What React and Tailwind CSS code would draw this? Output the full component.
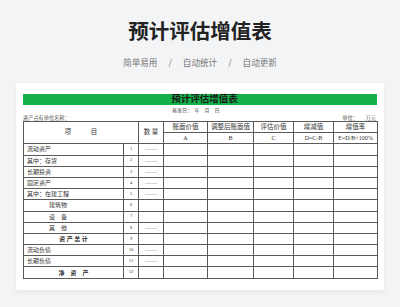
import React from 'react';

const serif = { fontFamily: "'Liberation Serif', 'Noto Sans CJK SC', serif" };

const rows = [
  { label: '流动资产', dash: true },
  { label: '其中：存货', dash: true },
  { label: '长期投资', dash: true },
  { label: '固定资产', dash: true },
  { label: '其中：在建工程', dash: true },
  { label: '建筑物', indent: true },
  { label: '设　备', indent: true },
  { label: '其　他', indent: true, dash: true },
  { label: '资 产 总 计', bold: true },
  { label: '流动负债', dash: true },
  { label: '长期负债', dash: true },
  { label: '净　资　产', bold: true },
];

const heads = [
  ['账面价值', 'A'],
  ['调整后账面值', 'B'],
  ['评估价值', 'C'],
  ['增减值', 'D=C-B'],
  ['增值率', 'E=D/B×100%'],
];

const cell = 'border border-[#5a5a5a] p-0 h-[11.2px] leading-none';

const ValueTable = () => (
  <table className="w-[354px] table-fixed border-collapse text-[#333]" style={serif}>
    <colgroup>
      <col className="w-[100px]" />
      <col className="w-[15px]" />
      <col className="w-[25px]" />
      <col className="w-[44px]" />
      <col className="w-[46px]" />
      <col className="w-[40px]" />
      <col className="w-[40px]" />
      <col className="w-[44px]" />
    </colgroup>
    <thead>
      <tr className="text-[6.5px] font-normal">
        <th colSpan={2} rowSpan={2} className={cell + ' font-normal'}>项　　　目</th>
        <th rowSpan={2} className={cell + ' font-normal'}>数 量</th>
        {heads.map(([t]) => (
          <th key={t} className={cell + ' font-normal'}>{t}</th>
        ))}
      </tr>
      <tr className="text-[6px]">
        {heads.map(([t, s]) => (
          <th key={s} className={cell + ' font-normal'}>{s}</th>
        ))}
      </tr>
    </thead>
    <tbody>
      {rows.map((r, i) => (
        <tr key={i} className="text-[6px]">
          <td
            className={
              cell +
              (r.bold
                ? ' text-center font-bold'
                : r.indent
                ? ' pl-[25px]'
                : ' pl-[3px]')
            }
          >
            {r.label}
          </td>
          <td className={cell + ' text-center text-[4.5px]'}>{i + 1}</td>
          <td className={cell + ' text-center text-[#777]'}>{r.dash ? '——' : ''}</td>
          <td className={cell}></td>
          <td className={cell}></td>
          <td className={cell}></td>
          <td className={cell}></td>
          <td className={cell}></td>
        </tr>
      ))}
    </tbody>
  </table>
);

export default function App() {
  return (
    <div
      className="w-[400px] h-[307px] bg-[#f3f4f6] flex flex-col items-center overflow-hidden"
      style={{ fontFamily: "'Noto Sans CJK SC', 'Noto Sans', sans-serif" }}
    >
      <h1 className="mt-[18px] text-[20.5px] leading-[24px] font-bold text-[#222]">预计评估增值表</h1>
      <div className="mt-[14px] flex items-center text-[8.6px] leading-[12px] text-[#777]">
        <span>简单易用</span>
        <span className="mx-[11px]">/</span>
        <span>自动统计</span>
        <span className="mx-[11px]">/</span>
        <span>自动更新</span>
      </div>

      <div className="mt-[15px] w-[368px] h-[207px] bg-white shadow-[0_2px_6px_rgba(0,0,0,0.06)] px-[7px] pt-[11px]">
        <div className="h-[11px] bg-[#14b14b] flex items-center justify-center">
          <span className="text-[9.5px] leading-none font-bold text-[#1a1a1a] pl-[9px]" style={serif}>
            预计评估增值表
          </span>
        </div>
        <div className="h-[6px] mt-[3px] text-[5px] leading-[6px] text-[#555] pl-[149px]" style={serif}>
          基准日：　年　月　日
        </div>
        <div className="h-[7px] flex items-end justify-between text-[5.2px] leading-[6px] text-[#555]" style={serif}>
          <span>资产占有单位名称：</span>
          <span className="pr-[1px]">单位：　　万元</span>
        </div>
        <ValueTable />
      </div>
    </div>
  );
}
